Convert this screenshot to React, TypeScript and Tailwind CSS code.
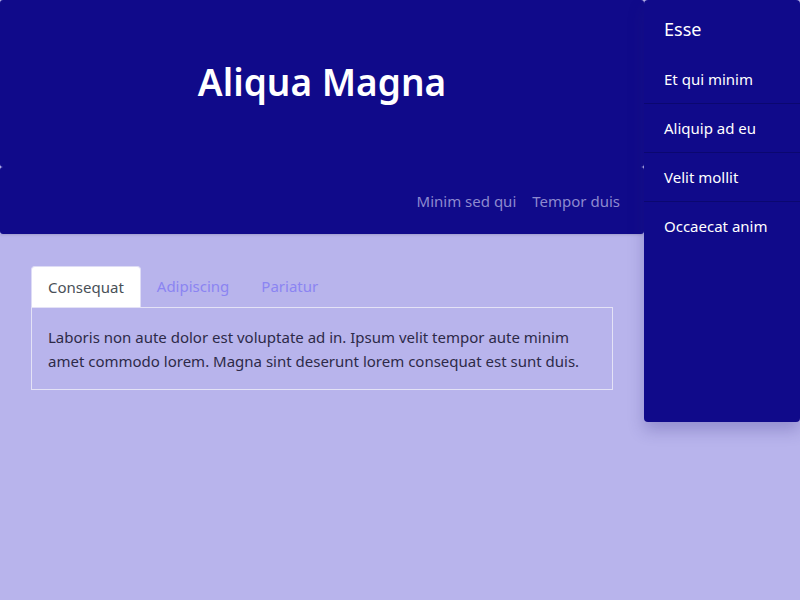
import React, { useState } from 'react';

const navLinks = ['Minim sed qui', 'Tempor duis'];
const sideItems = ['Et qui minim', 'Aliquip ad eu', 'Velit mollit', 'Occaecat anim'];
const tabs = ['Consequat', 'Adipiscing', 'Pariatur'];

const App: React.FC = () => {
  const [active, setActive] = useState(0);

  return (
    <div
      className="relative min-h-[600px] w-[800px] bg-[#b8b4ec]"
      style={{ fontFamily: '"Noto Sans", "Open Sans", sans-serif' }}
    >
      <div className="flex">
        <div className="w-[644px]">
          <header className="shadow-sm">
            <div className="flex h-[167px] items-start justify-center rounded-[3px] bg-[#100a8a] pt-[56px]">
              <h1 className="text-[37px] font-semibold leading-[52px] text-white">Aliqua Magna</h1>
            </div>
            <nav className="flex h-[67px] items-center justify-end gap-4 rounded-[3px] bg-[#100a8a] pr-6 pt-[2px]">
              {navLinks.map((l) => (
                <a key={l} className="text-[15px] text-[#8d89cf]">{l}</a>
              ))}
            </nav>
          </header>

          <main className="px-[31px] pt-[32px]">
            <div className="flex">
              {tabs.map((t, i) => (
                <button
                  key={t}
                  onClick={() => setActive(i)}
                  className={
                    i === active
                      ? 'h-[41px] rounded-t-[4px] border border-b-0 border-[#dedcf5] bg-white px-4 text-[15px] text-[#495057]'
                      : 'h-[41px] px-4 text-[15px] text-[#8b84f2]'
                  }
                >
                  {t}
                </button>
              ))}
            </div>
            <div className="border border-[#e4e2f6] px-4 pt-[17px] pb-[16px] text-[15px] leading-[24px] text-[#2d2a48]">
              Laboris non aute dolor est voluptate ad in. Ipsum velit tempor aute minim amet commodo lorem. Magna sint deserunt lorem consequat est sunt duis.
            </div>
          </main>
        </div>

        <aside className="h-[422px] w-[156px] rounded-[4px] bg-[#100a8a] shadow-[0_8px_16px_rgba(40,30,120,0.25)]">
          <div className="px-5 pt-[16px] pb-[13px] text-[18px] leading-[26px] text-white">Esse</div>
          {sideItems.map((s, i) => (
            <div
              key={s}
              className={
                i < sideItems.length - 1
                  ? 'border-b border-[#0b0770] px-5 py-[12px] text-[15px] leading-[24px] text-white'
                  : 'px-5 py-[12px] text-[15px] leading-[24px] text-white'
              }
            >
              {s}
            </div>
          ))}
        </aside>
      </div>
    </div>
  );
};

export default App;
